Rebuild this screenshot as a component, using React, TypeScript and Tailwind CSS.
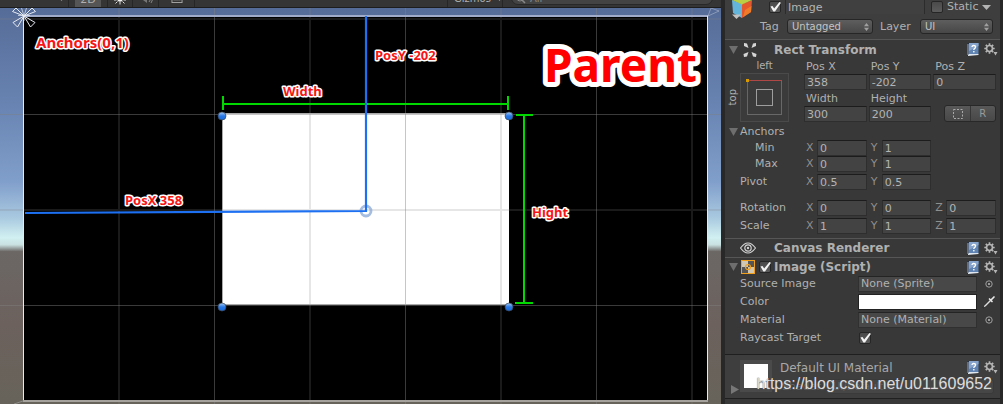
import React from "react";

const fieldBox =
  "h-4 w-full min-w-0 border border-[#2e2e2e] border-t-[#1c1c1c] bg-[#434343] px-0.5 text-[11px] leading-[14px] text-[#b4b4b4] outline-none";

function TextField({ id, value, label }: { id?: string; value: string; label?: string }) {
  return <input id={id} aria-label={label} defaultValue={value} className={fieldBox} />;
}

function AxisField({ axis, value, name }: { axis: string; value: string; name: string }) {
  return (
    <label className="flex items-center">
      <span className="w-[13px] shrink-0 pl-0.5 text-[#8f8f8f]">{axis}</span>
      <TextField value={value} label={name + " " + axis} />
    </label>
  );
}

function VectorRow({ name, indent, values }: { name: string; indent?: boolean; values: string[] }) {
  const axes = ["X", "Y", "Z"];
  return (
    <div className="grid h-4 grid-cols-[77px_1fr_1fr_1fr] items-center gap-x-0.5 pr-1">
      <span className={indent ? "pl-[30px]" : "pl-[15px]"}>{name}</span>
      {values.map((v, i) => (
        <AxisField key={axes[i]} axis={axes[i]} value={v} name={name} />
      ))}
    </div>
  );
}

function Fold() {
  return (
    <svg viewBox="0 0 9 8" className="h-2 w-[9px] shrink-0">
      <path d="M0 0H9L4.500 8Z" fill="#6e6e6e" />
    </svg>
  );
}

function HelpBook() {
  return (
    <button aria-label="Help" className="h-[13px] w-3">
      <svg viewBox="0 0 12 13" className="h-[13px] w-3">
        <path d="M0 1L2 0V12L0 13Z" fill="#1b2c48" />
        <path d="M2 0H11.500V11H2Z" fill="#5f83b2" />
        <path d="M2 0H11.500V3L2 8Z" fill="#86a3cb" />
        <path d="M2 11H11.500V12L1 13V12Z" fill="#e0e6ee" />
        <path d="M1 1V12" stroke="#c5d5ea" strokeWidth=".8" />
        <path d="M5 4Q5 2.500 6.700 2.500Q8.600 2.500 8.600 4Q8.600 5 7.500 5.600Q6.800 6 6.800 7" stroke="#fff" strokeWidth="1.300" fill="none" />
        <rect x="6.100" y="8" width="1.400" height="1.400" fill="#fff" />
      </svg>
    </button>
  );
}

function GearMenu() {
  return (
    <button aria-label="Component menu" className="h-[13px] w-[14px]">
      <svg viewBox="0 0 14 13" className="h-[13px] w-[14px]">
        <g stroke="#b5b5b5">
          <circle cx="5.500" cy="5.500" r="3" fill="none" strokeWidth="1.700" />
          <path
            d="M5.500 0.300V2M5.500 9V10.700M0.300 5.500H2M9 5.500H10.700M1.800 1.800L3.100 3.100M7.900 7.900L9.200 9.200M9.200 1.800L7.900 3.100M3.100 7.900L1.800 9.200"
            strokeWidth="1.700"
          />
        </g>
        <path d="M9.500 9H13.500L11.500 12.500Z" fill="#b5b5b5" />
      </svg>
    </button>
  );
}

function Tools() {
  return (
    <div className="ml-auto flex items-center gap-[5px] pr-0.5">
      <HelpBook />
      <GearMenu />
    </div>
  );
}

function Check({ id, label, checked }: { id?: string; label?: string; checked?: boolean }) {
  return (
    <span className="relative inline-flex size-3 shrink-0">
      <input
        type="checkbox"
        id={id}
        aria-label={label}
        defaultChecked={checked}
        className="peer size-3 appearance-none rounded-[2px] border border-[#262626] bg-linear-to-b from-[#4a4a4a] to-[#5c5c5c]"
      />
      <svg viewBox="0 0 12 12" className="pointer-events-none absolute inset-0 hidden size-3 overflow-visible peer-checked:block">
        <path d="M1.500 5.500L3.500 5L5.200 7.500L10.500 1L12 1.800L6 10.500H4.400Z" fill="#f4f4f4" />
      </svg>
    </span>
  );
}

function Dropdown({ id, value, className }: { id: string; value: string; className: string }) {
  return (
    <span className={"relative " + className}>
      <select
        id={id}
        defaultValue={value}
        className="block h-[15px] w-full appearance-none rounded-[3px] border border-[#262626] bg-linear-to-b from-[#5e5e5e] to-[#474747] pl-1 text-[10px] leading-3 text-[#c4c4c4]"
      >
        <option>{value}</option>
      </select>
      <svg viewBox="0 0 5 8" className="pointer-events-none absolute top-1 right-1 h-2 w-[5px]">
        <path d="M0 3.300L2.500 0L5 3.300ZM0 4.700H5L2.500 8Z" fill="#a0a0a0" />
      </svg>
    </span>
  );
}

function ObjectRow({ name, value }: { name: string; value: string }) {
  return (
    <div className="flex h-4 items-center pl-[15px]">
      <span className="w-[118px] shrink-0">{name}</span>
      <button className="h-4 flex-1 border border-[#303030] border-t-[#242424] bg-[#484848] px-0.5 text-left text-[11px] leading-[14px]">{value}</button>
      <button aria-label={"Select " + name} className="flex w-[23px] justify-center">
        <svg viewBox="0 0 8 8" className="size-2">
          <circle cx="4" cy="4" r="3.200" fill="none" stroke="#aaa" strokeWidth=".9" />
          <circle cx="4" cy="4" r="1" fill="#bbb" />
        </svg>
      </button>
    </div>
  );
}

function SceneToolbar() {
  return (
    <div className="flex h-2 items-end overflow-hidden border-b border-[#1d1d1d] bg-[#353535] text-[10px] text-[#b0b0b0]">
      <button aria-label="Shading mode" className="flex h-4 w-[69px] justify-end border-r border-[#262626] pr-1">
        <svg viewBox="0 0 5 10" className="h-[10px] w-[5px]"><path d="M0 7H5L2.500 10Z" fill="#999" /></svg>
      </button>
      <button className="ml-1.5 h-4 w-[26px] bg-[#555] pb-px text-[11px] leading-[18px]">2D</button>
      <button aria-label="Lighting" className="ml-1.5 flex h-4 w-[26px] justify-center border-x border-[#262626]">
        <svg viewBox="0 0 12 14" className="h-[14px] w-3">
          <circle cx="6" cy="8" r="2.800" fill="#eee" />
          <path d="M6 11V13.500M0 9H2.500M9.500 9H12M1.500 12.500L3.500 10.500M10.500 12.500L8.500 10.500" stroke="#ddd" />
        </svg>
      </button>
      <button aria-label="Audio" className="flex h-4 w-[26px] justify-center border-r border-[#262626]">
        <svg viewBox="0 0 14 14" className="h-[14px] w-[14px]">
          <path d="M1 5H4L8 2V12L4 9H1Z" fill="#777" />
          <path d="M10 11Q12 9 12 5M12 12Q14 9 14 5" stroke="#888" fill="none" />
        </svg>
      </button>
      <button aria-label="Effects" className="flex h-4 w-[36px] items-start justify-center border-r border-[#262626]">
        <svg viewBox="0 0 12 12" className="mt-px h-[11px] w-3">
          <rect x=".5" y=".5" width="11" height="11" fill="none" stroke="#aaa" />
          <path d="M2 9L5 5L8 9L9 7L10 9Z" fill="#bbb" />
        </svg>
      </button>
      <button aria-label="Effects options" className="h-4 w-[26px]" />
      <span className="flex-1" />
      <button className="flex h-4 w-14 items-start border-x border-[#262626] pl-1.5 leading-4">
        Gizmos
        <svg viewBox="0 0 5 10" className="ml-1.5 h-[10px] w-[5px]"><path d="M0 7H5L2.500 10Z" fill="#999" /></svg>
      </button>
      <button className="mr-2 mb-0.5 ml-2 flex h-[14px] w-[202px] items-start gap-1 rounded-full border border-[#282828] bg-[#434343] pl-1 leading-[13px] text-[#8a8a8a]">
        <svg viewBox="0 0 10 12" className="h-3 w-[10px]">
          <circle cx="4" cy="6" r="3" fill="none" stroke="#888" />
          <path d="M6 8L9 11" stroke="#888" strokeWidth="1.500" />
        </svg>
        All
      </button>
    </div>
  );
}

const handles = [
  [222, 108],
  [509, 108],
  [222, 299],
  [509, 299],
];

function Scene() {
  return (
    <svg viewBox="0 0 721 396" preserveAspectRatio="xMinYMin slice" className="min-h-0 w-full flex-1">
      <defs>
        <linearGradient id="sky" x1="0" y1="0" x2="0" y2="396" gradientUnits="userSpaceOnUse">
          <stop offset="0" stopColor="#566c98" />
          <stop offset=".25" stopColor="#6984b2" />
          <stop offset=".44" stopColor="#819fcb" />
          <stop offset=".53" stopColor="#a9c9e0" />
          <stop offset=".58" stopColor="#d1f0f1" />
          <stop offset=".598" stopColor="#c9e0e1" />
          <stop offset=".615" stopColor="#6b6765" />
          <stop offset=".8" stopColor="#6c615d" />
          <stop offset="1" stopColor="#67635a" />
        </linearGradient>
        <linearGradient id="knob" x1="0" y1="0" x2="0" y2="1">
          <stop offset="0" stopColor="#a9ccf5" />
          <stop offset=".5" stopColor="#2b78e4" />
          <stop offset="1" stopColor="#1569dd" />
        </linearGradient>
      </defs>
      <rect width="721" height="396" fill="url(#sky)" />
      <rect x="24" y="9" width="683" height="384" fill="#000" />
      <rect x="222" y="105" width="287" height="191" fill="#fff" />
      <g stroke="#808080" fill="none">
        <path d="M119 0V396M310 0V396M501 0V396M692 0V396M0 11H721M0 202H721" strokeWidth="2" opacity=".2" />
        <path d="M214.500 0V396M405.500 0V396M596.500 0V396M0 106.500H721M0 297.500H721" opacity=".45" />
        <path d="M222.500 296V105.500H509M222 296.500H509" stroke="#aaa" />
      </g>
      <path d="M23 8H708" stroke="#a0aac9" strokeWidth="2" />
      <path d="M23.500 8V393M707.500 8V393" stroke="#e6eaf0" />
      <path d="M23 393H708" stroke="#a5a19c" strokeWidth="2" />
      <g stroke="#e6eaf2" strokeWidth="1" fill="none">
        <path d="M24 8L13 14.500L17.500 19ZM24 8L35 14.500L30.500 19ZM24 8L12.500 3.500L16 0M24 8L35.500 3.500L32 0M24 8L16 0M24 8L32 0" />
        <path d="M24 8L21.500 0M24 8L26.500 0M18 7.500H30M24 8V13" opacity=".7" />
        <path d="M708 8L711 0L719 3Z" opacity=".35" />
        <path d="M14 396L23 393" opacity=".3" />
      </g>
      <path d="M223 96H508M223 88V102M508 88V102M516 107H533M524 107V295M515 295H533" stroke="#00d900" strokeWidth="2" fill="none" />
      <circle cx="366" cy="203" r="5" fill="none" stroke="#8eacd8" strokeWidth="2.800" opacity=".8" />
      <path d="M366 8V203L25 205" stroke="#1d70f2" strokeWidth="2.200" fill="none" />
      {handles.map(([x, y]) => (
        <circle key={x + "-" + y} cx={x} cy={y} r="4" fill="url(#knob)" stroke="#3c4654" strokeWidth=".7" />
      ))}
      <g
        fontFamily="'Noto Sans', 'Open Sans', sans-serif"
        fontWeight="700"
        fill="#f81414"
        stroke="#fff"
        strokeWidth="3"
        strokeLinejoin="round"
        paintOrder="stroke"
        fontSize="13"
      >
        <text x="36" y="40" fontSize="15">Anchors(0,1)</text>
        <text x="375" y="52">PosY -202</text>
        <text x="283" y="88">Width</text>
        <text x="125" y="197">PosX 358</text>
        <text x="532" y="209">Hight</text>
        <text x="544" y="74" fontSize="46" strokeWidth="10" fill="#f00">Parent</text>
      </g>
    </svg>
  );
}

function ObjectHeader() {
  return (
    <header className="flex h-[40px] border-b border-[#565656] bg-[#3e3e3e]">
      <button aria-label="Object icon" className="ml-1.5 h-5 w-[22px] shrink-0">
        <svg viewBox="0 0 22 20" className="h-5 w-[22px]">
          <path d="M1 0L11 4V18L2 13Z" fill="#64b5dc" />
          <path d="M11 4L21 0L20 12L11 18Z" fill="#e4572d" />
          <path d="M1 0H21L11 4.500Z" fill="#b9cf45" />
          <path d="M14 10L20.500 6L20 12L12 17.300Z" fill="#ef7b28" />
          <path d="M1 14.500H10L5.500 19Z" fill="#c2c2c2" />
        </svg>
      </button>
      <div className="flex-1">
        <div className="flex h-[14px] items-center gap-1 overflow-hidden pl-4">
          <Check label="Active" checked />
          <input
            aria-label="Object name"
            defaultValue="Image"
            className="h-4 w-[140px] border border-[#2c2c2c] bg-[#404040] px-0.5 text-[11px] text-[#b4b4b4]"
          />
          <span className="ml-0.5 flex items-center gap-1">
            <Check id="static" />
            <label htmlFor="static">Static</label>
          </span>
          <button aria-label="Static options">
            <svg viewBox="0 0 9 5" className="h-[5px] w-[9px]"><path d="M0 0H9L4.500 5Z" fill="#b4b4b4" /></svg>
          </button>
        </div>
        <div className="mt-[5px] flex items-center">
          <label htmlFor="tag" className="w-[34px] pl-[7px]">Tag</label>
          <Dropdown id="tag" value="Untagged" className="w-[86px]" />
          <label htmlFor="layer" className="w-[47px] pl-[7px]">Layer</label>
          <Dropdown id="layer" value="UI" className="w-[73px]" />
        </div>
      </div>
    </header>
  );
}

function AnchorPreset() {
  return (
    <div className="grid w-[77px] shrink-0 grid-cols-[15px_49px] grid-rows-[14px_49px]">
      <span className="col-start-2 text-center text-[10px] leading-[14px]">left</span>
      <span className="col-start-1 row-start-2 flex items-center justify-center text-[10px] leading-3 [writing-mode:sideways-lr]">top</span>
      <button aria-label="Anchor presets" className="col-start-2 row-start-2">
        <svg viewBox="0 0 49 49" className="size-[49px]">
          <rect x=".5" y=".5" width="48" height="48" fill="#3b3b3b" stroke="#4a4a4a" />
          <rect x="7.500" y="7.500" width="34" height="34" fill="none" stroke="#686868" />
          <rect x="16.500" y="16.500" width="16" height="16" fill="none" stroke="#9e9e9e" />
          <path d="M7.500 42V7.500H42" fill="none" stroke="#b04747" />
          <rect x="6" y="6" width="3" height="3" fill="#d99a00" />
        </svg>
      </button>
    </div>
  );
}

function SizeField({ name, value }: { name: string; value: string }) {
  const id = "rect-" + name.replace(" ", "-").toLowerCase();
  return (
    <div className="flex flex-col">
      <label htmlFor={id} className="h-[15px] pl-0.5 leading-[15px]">{name}</label>
      <TextField id={id} value={value} />
    </div>
  );
}

function RectTransform() {
  return (
    <section className="border-b border-[#565656] pb-1">
      <div className="flex h-[19px] items-center pl-1">
        <Fold />
        <svg viewBox="0 0 16 16" className="mr-4 ml-1 size-4">
          <path d="M2 1L5 1.500L6.500 6L2 4ZM14 1L11 1.500L9.500 6L14 4ZM2 15L1.500 12L6.500 10L5 14.500ZM14 15L14.500 12L9.500 10L11 14.500Z" fill="#d6d6d6" />
        </svg>
        <h2 className="text-xs font-bold">Rect Transform</h2>
        <Tools />
      </div>
      <div className="mb-0.5 flex gap-x-0.5 pr-1">
        <AnchorPreset />
        <div className="grid flex-1 grid-cols-3 gap-x-0.5 gap-y-px">
          <SizeField name="Pos X" value="358" />
          <SizeField name="Pos Y" value="-202" />
          <SizeField name="Pos Z" value="0" />
          <SizeField name="Width" value="300" />
          <SizeField name="Height" value="200" />
          <div className="ml-[11px] flex h-[17px] self-end overflow-hidden rounded-[3px] border border-[#282828] bg-linear-to-b from-[#585858] to-[#484848]">
            <button aria-label="Blueprint mode" className="flex flex-1 items-center justify-center border-r border-[#363636]">
              <svg viewBox="0 0 10 10" className="size-[10px]">
                <rect x=".5" y=".5" width="9" height="9" fill="none" stroke="#aaa" strokeDasharray="2 1.500" />
              </svg>
            </button>
            <button className="flex-1 text-[10px] leading-[15px] text-[#999]">R</button>
          </div>
        </div>
      </div>
      <div className="flex h-4 items-center gap-0.5 pl-1">
        <Fold />
        Anchors
      </div>
      <VectorRow name="Min" indent values={["0", "1"]} />
      <VectorRow name="Max" indent values={["0", "1"]} />
      <div className="mt-0.5 mb-2.5">
        <VectorRow name="Pivot" values={["0.5", "0.5"]} />
      </div>
      <div className="flex flex-col gap-0.5">
        <VectorRow name="Rotation" values={["0", "0", "0"]} />
        <VectorRow name="Scale" values={["1", "1", "1"]} />
      </div>
    </section>
  );
}

function ImageComponent() {
  return (
    <section className="border-b border-[#1f1f1f] pb-2">
      <div className="flex h-[18px] items-center pl-1">
        <Fold />
        <svg viewBox="0 0 14 14" className="mr-1 ml-[3px] size-[14px]">
          <rect x=".5" y=".5" width="13" height="13" fill="#555" stroke="#f0a01c" />
          <path d="M1 1H7V7H1ZM7 7H13V13H7Z" fill="#cfc6b4" />
          <circle cx="7" cy="7" r="2.500" fill="none" stroke="#f0a01c" strokeWidth="1.200" />
        </svg>
        <Check label="Image enabled" checked />
        <h2 className="ml-[3px] text-xs font-bold">Image (Script)</h2>
        <Tools />
      </div>
      <div className="flex flex-col gap-0.5">
        <ObjectRow name="Source Image" value="None (Sprite)" />
        <div className="flex h-4 items-center pl-[15px]">
          <span className="w-[118px] shrink-0">Color</span>
          <button aria-label="Color" className="h-4 flex-1 border border-[#222] bg-white" />
          <button aria-label="Pick color" className="flex w-[23px] justify-center">
            <svg viewBox="0 0 14 14" className="size-[14px]">
              <path d="M1 13L2 10.500L8 4.500L9.500 6L3.500 12Z" fill="#ddd" stroke="#111" strokeWidth=".7" />
              <path d="M7.500 4L10 6.500M9 5L12 2" stroke="#e8e8e8" strokeWidth="1.700" strokeLinecap="round" />
            </svg>
          </button>
        </div>
        <ObjectRow name="Material" value="None (Material)" />
        <div className="flex h-4 items-center pl-[15px]">
          <label htmlFor="raycast" className="w-[119px]">Raycast Target</label>
          <Check id="raycast" checked />
        </div>
      </div>
    </section>
  );
}

function MaterialFooter() {
  return (
    <section className="relative flex h-[44px] shrink-0 border-b border-[#202020] bg-[#3e3e3e] pt-[5px]">
      <svg viewBox="0 0 8 9" className="mb-1 ml-1.5 h-[9px] w-2 self-end"><path d="M0 0L8 4.500L0 9Z" fill="#777" /></svg>
      <div className="ml-px size-8 bg-[#4a4a4a] p-1">
        <div className="size-6 bg-white" />
      </div>
      <div className="flex-1 pl-2">
        <div className="flex h-[15px] items-center text-xs text-[#a8a8a8]">
          Default UI Material
          <Tools />
        </div>
        <div className="mt-1 flex h-[15px] items-center text-[#626262]">
          <label htmlFor="shader" className="w-12 pl-0.5">Shader</label>
          <select id="shader" className="mr-1.5 h-[15px] flex-1 appearance-none rounded-[3px] border border-[#3a3a3a] bg-[#464646] pl-1 text-[10px] leading-3 text-[#626262]">
            <option>UI/Default</option>
          </select>
        </div>
      </div>
      <div className="pointer-events-none absolute right-2 bottom-0.5 font-['Liberation_Sans',Arial,sans-serif] text-base leading-6 whitespace-nowrap text-[#dcdcdc] [text-shadow:0_1px_1px_#555]">
        https://blog.csdn.net/u011609652
      </div>
    </section>
  );
}

export default function App() {
  return (
    <div className="flex h-screen overflow-hidden bg-[#282828] font-['DejaVu_Sans',Verdana,sans-serif] text-[11px] leading-[14px] text-[#b0b0b0]">
      <main className="flex min-w-0 flex-1 flex-col">
        <SceneToolbar />
        <Scene />
      </main>
      <aside className="mr-[3px] ml-1 flex w-[275px] shrink-0 flex-col bg-[#383838]">
        <ObjectHeader />
        <RectTransform />
        <section className="flex h-[19px] items-center border-b border-[#565656] pl-[15px]">
          <svg viewBox="0 0 16 12" className="mr-[18px] h-3 w-4">
            <path d="M.5 6Q8 -4 15.500 6Q8 16 .5 6Z" fill="none" stroke="#d2d2d2" strokeWidth="1.200" />
            <circle cx="8" cy="6" r="3.200" fill="none" stroke="#d2d2d2" strokeWidth="1.200" />
            <circle cx="8" cy="6" r="1.200" fill="#d2d2d2" />
          </svg>
          <h2 className="text-xs font-bold">Canvas Renderer</h2>
          <Tools />
        </section>
        <ImageComponent />
        <MaterialFooter />
        <div className="flex-1 bg-[#383838]" />
      </aside>
    </div>
  );
}
